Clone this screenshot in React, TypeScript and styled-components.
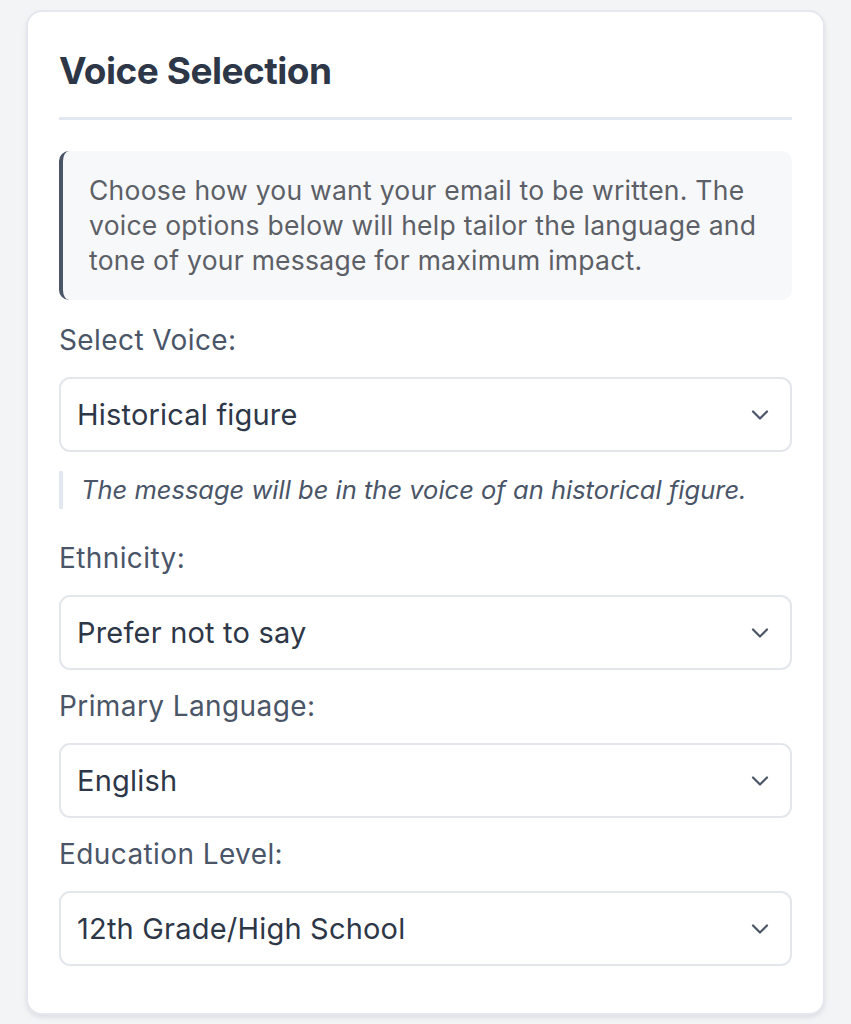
import * as React from 'react';
import styled, { createGlobalStyle } from 'styled-components';

const GlobalStyle = createGlobalStyle`
    body {
        margin: 0;
        background: #f3f4f5;
        font-family: Inter, "Noto Sans", "Liberation Sans", sans-serif;
    }
`;

const Page = styled.div`
    padding: 10px 26px 12px 26px;
`;

const Card = styled.section`
    background: #ffffff;
    border: 2px solid #e4e8ee;
    border-radius: 16px;
    padding: 37px 31px 47px 31px;
    box-shadow: 0 3px 4px rgba(160, 170, 185, 0.25);
`;

const Title = styled.h2`
    margin: 0 0 31px 0;
    padding-bottom: 24px;
    border-bottom: 3px solid #e2e8f0;
    font-size: 37px;
    line-height: 44px;
    font-weight: 700;
    color: #2d3748;
    letter-spacing: -0.5px;
`;

const Intro = styled.div`
    background: #f7f8fa;
    border-left: 4px solid #4a5568;
    border-radius: 10px;
    padding: 22px 26px;
    margin-bottom: 25px;
    font-size: 26.5px;
    line-height: 35px;
    letter-spacing: 0.25px;
    color: #5c6066;
`;

const Field = styled.div`
    margin-top: ${(p: { $gap: number }) => p.$gap}px;
`;

const Label = styled.label`
    display: block;
    font-size: 28px;
    line-height: 30px;
    letter-spacing: 0.4px;
    color: #4a5568;
    margin-bottom: 22px;
`;

const SelectWrap = styled.div`
    position: relative;
`;

const Select = styled.select`
    appearance: none;
    -webkit-appearance: none;
    width: 100%;
    height: 75px;
    box-sizing: border-box;
    border: 2px solid #e3e7ec;
    border-radius: 11px;
    background: #ffffff;
    padding: 0 60px 0 16px;
    font-family: inherit;
    font-size: 29px;
    letter-spacing: 0.2px;
    color: #2d3748;
    outline: none;
`;

const Chevron = styled.svg`
    position: absolute;
    right: 23px;
    top: 50%;
    transform: translateY(-50%);
    pointer-events: none;
`;

const Hint = styled.p`
    margin: 19px 0 0 0;
    border-left: 4px solid #e2e8f0;
    padding: 2px 0 2px 18px;
    font-size: 25.5px;
    line-height: 34px;
    font-style: italic;
    color: #4a5568;
`;

const ChevronIcon = () => (
    <Chevron width='18' height='11' viewBox='0 0 18 11' fill='none'>
        <path d='M2 2 L9 9 L16 2' stroke='#4a5568' strokeWidth='2.2' strokeLinecap='round' strokeLinejoin='round' />
    </Chevron>
);

interface IDropdown {
    label: string;
    value: string;
    options: string[];
    gap: number;
}

const Dropdown: React.FunctionComponent<IDropdown & { children?: React.ReactNode }> = ({ label, value, options, gap, children }) => (
    <Field $gap={gap}>
        <Label>{label}</Label>
        <SelectWrap>
            <Select defaultValue={value}>
                {options.map(o => <option key={o}>{o}</option>)}
            </Select>
            <ChevronIcon />
        </SelectWrap>
        {children}
    </Field>
);

const App = () => (
    <Page>
        <GlobalStyle />
        <Card>
            <Title>Voice Selection</Title>
            <Intro>
                Choose how you want your email to be written. The voice options below will help tailor the language and tone of your message for maximum impact.
            </Intro>
            <Dropdown label='Select Voice:' value='Historical figure' options={['Historical figure', 'Professional', 'Friendly', 'Formal']} gap={0}>
                <Hint>The message will be in the voice of an historical figure.</Hint>
            </Dropdown>
            <Dropdown label='Ethnicity:' value='Prefer not to say' options={['Prefer not to say']} gap={34} />
            <Dropdown label='Primary Language:' value='English' options={['English', 'Spanish', 'French']} gap={21} />
            <Dropdown label='Education Level:' value='12th Grade/High School' options={['12th Grade/High School', 'College', 'Graduate']} gap={21} />
        </Card>
    </Page>
);

export default App;
